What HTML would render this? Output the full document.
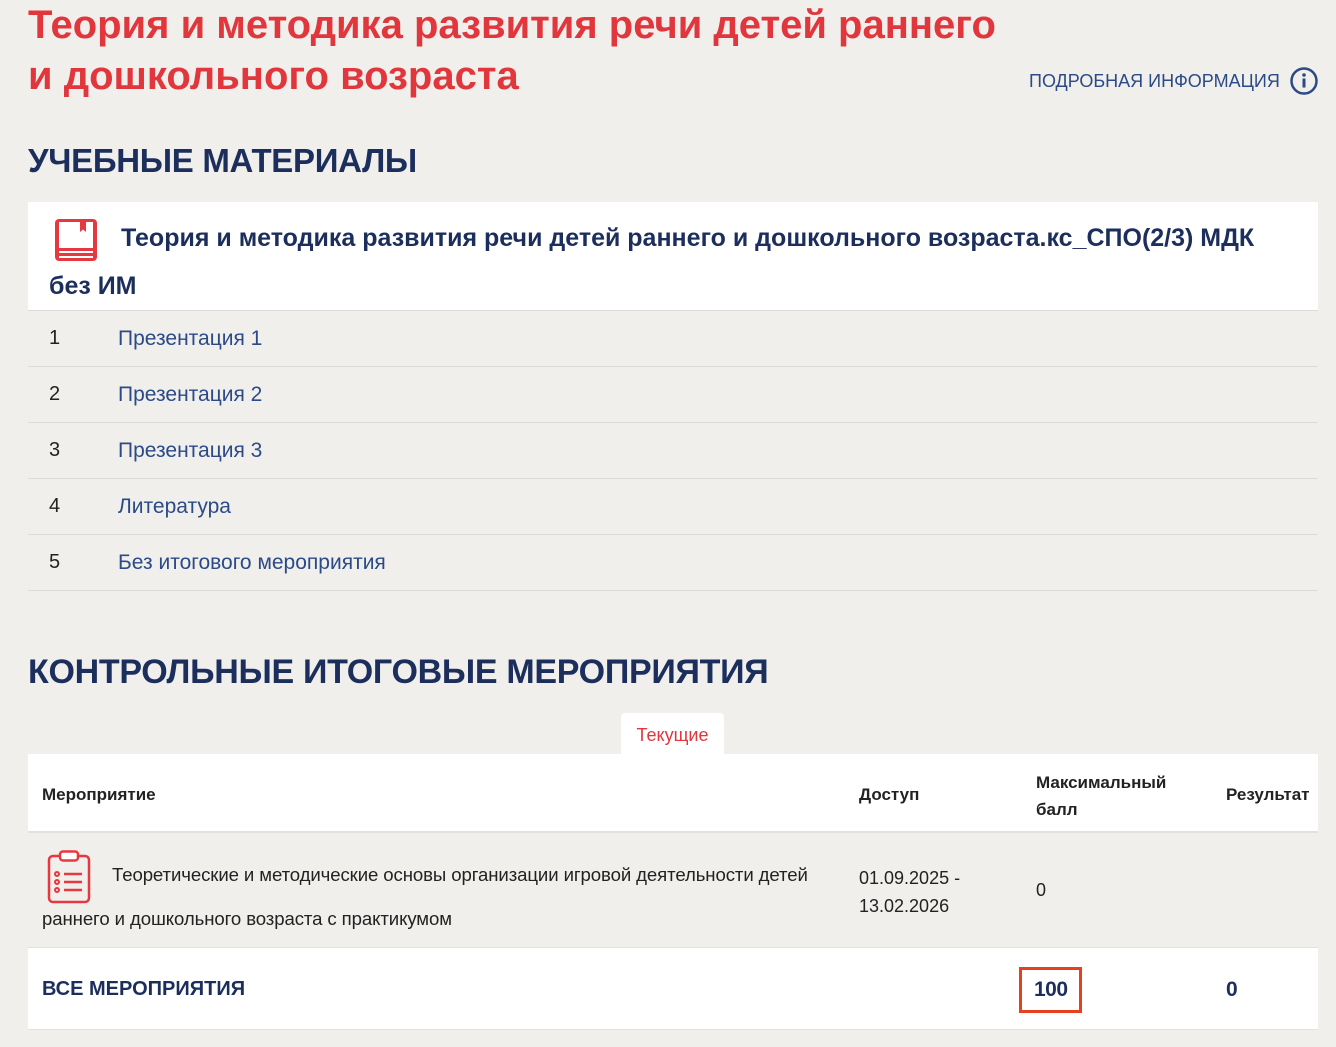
<!DOCTYPE html>
<html><head><meta charset="utf-8"><style>
*{margin:0;padding:0;box-sizing:border-box}
body{width:1336px;height:1047px;background:#f0efec;font-family:"Liberation Sans","DejaVu Sans",sans-serif;position:relative;overflow:hidden;color:#222}
.a{position:absolute;white-space:nowrap}
.title{color:#e0363c;font-size:40px;font-weight:bold;left:28px;line-height:52px}
.h2{color:#1c2e5c;font-size:33px;font-weight:bold;left:28px;letter-spacing:-0.3px}
.row{position:absolute;left:28px;width:1290px;height:56px;border-bottom:1px solid #dcdbd8}
.row .n{position:absolute;left:21px;top:16px;font-size:20px;color:#222}
.row .l{position:absolute;left:90px;top:16px;font-size:21px;color:#2b4a86}
.th{font-size:17px;font-weight:bold;color:#222}
</style></head><body>
<div class="a title" style="top:-1px">Теория и методика развития речи детей раннего</div>
<div class="a title" style="top:50px">и дошкольного возраста</div>
<div class="a" style="left:1029px;top:71px;font-size:18px;color:#2b4a86">ПОДРОБНАЯ ИНФОРМАЦИЯ</div>
<svg class="a" style="left:1289px;top:66px" width="30" height="30" viewBox="0 0 30 30"><circle cx="15" cy="15" r="12.5" fill="none" stroke="#2b4a86" stroke-width="2.5"/><circle cx="15" cy="9" r="1.8" fill="#2b4a86"/><rect x="13.5" y="12.5" width="3" height="9" fill="#2b4a86"/></svg>
<div class="a h2" style="top:142px">УЧЕБНЫЕ МАТЕРИАЛЫ</div>
<div class="a" style="left:28px;top:202px;width:1290px;height:109px;background:#fff;border-bottom:1px solid #dcdbd8"></div>
<svg class="a" style="left:53px;top:217px" width="46" height="46" viewBox="0 0 46 46"><rect x="2" y="2" width="42" height="42" rx="4" fill="#e8383f"/><rect x="6" y="5" width="34" height="26" fill="#fff"/><path d="M27 5v10l3-2.5 3 2.5V5z" fill="#e8383f"/><rect x="6" y="34" width="34" height="2" fill="#fff"/><rect x="6" y="39" width="34" height="2" fill="#fff"/></svg>
<div class="a" style="left:121px;top:224px;font-size:25px;font-weight:bold;color:#1c2e5c">Теория и методика развития речи детей раннего и дошкольного возраста.кс_СПО(2/3) МДК</div>
<div class="a" style="left:49px;top:272px;font-size:25px;font-weight:bold;color:#1c2e5c">без ИМ</div>
<div class="row" style="top:311px"><span class="n">1</span><span class="l">Презентация 1</span></div>
<div class="row" style="top:367px"><span class="n">2</span><span class="l">Презентация 2</span></div>
<div class="row" style="top:423px"><span class="n">3</span><span class="l">Презентация 3</span></div>
<div class="row" style="top:479px"><span class="n">4</span><span class="l">Литература</span></div>
<div class="row" style="top:535px"><span class="n">5</span><span class="l">Без итогового мероприятия</span></div>
<div class="a h2" style="top:653px;font-size:34px">КОНТРОЛЬНЫЕ ИТОГОВЫЕ МЕРОПРИЯТИЯ</div>
<div class="a" style="left:621px;top:713px;width:103px;height:42px;background:#fff;border-radius:4px 4px 0 0;color:#e0363c;font-size:18px;text-align:center;line-height:44px">Текущие</div>
<div class="a" style="left:28px;top:754px;width:1290px;height:79px;background:#fff;border-bottom:2px solid #e2e1de"></div>
<div class="a th" style="left:42px;top:785px">Мероприятие</div>
<div class="a th" style="left:859px;top:785px">Доступ</div>
<div class="a th" style="left:1036px;top:769px;line-height:27px">Максимальный<br>балл</div>
<div class="a th" style="left:1226px;top:785px">Результат</div>
<svg class="a" style="left:47px;top:850px" width="44" height="54" viewBox="0 0 44 54"><rect x="2" y="6" width="40" height="46" rx="4" fill="none" stroke="#e8383f" stroke-width="2.5"/><rect x="13" y="1.5" width="18" height="9" rx="3" fill="#fff" stroke="#e8383f" stroke-width="2.5"/><g fill="none" stroke="#e8383f" stroke-width="2"><circle cx="10" cy="24" r="2"/><circle cx="10" cy="32" r="2"/><circle cx="10" cy="40" r="2"/></g><g stroke="#e8383f" stroke-width="2.5"><path d="M17 24h18M17 32h18M17 40h18"/></g></svg>
<div class="a" style="left:112px;top:864px;font-size:18.6px;color:#222;letter-spacing:-0.1px">Теоретические и методические основы организации игровой деятельности детей</div>
<div class="a" style="left:42px;top:908px;font-size:18.6px;color:#222;letter-spacing:-0.1px">раннего и дошкольного возраста с практикумом</div>
<div class="a" style="left:859px;top:864px;font-size:18px;line-height:28px;color:#222">01.09.2025 -<br>13.02.2026</div>
<div class="a" style="left:1036px;top:880px;font-size:18px;color:#222">0</div>
<div class="a" style="left:28px;top:947px;width:1290px;height:83px;background:#fff;border-top:1px solid #e2e1de;border-bottom:1px solid #e2e1de"></div>
<div class="a" style="left:42px;top:978px;font-size:20px;font-weight:bold;color:#1c2e5c">ВСЕ МЕРОПРИЯТИЯ</div>
<div class="a" style="left:1019px;top:967px;width:63px;height:46px;border:3px solid #e8401f"></div>
<div class="a" style="left:1034px;top:978px;font-size:21px;color:#1c2e5c;font-weight:bold;letter-spacing:-0.5px">100</div>
<div class="a" style="left:1226px;top:978px;font-size:21px;font-weight:bold;color:#1c2e5c">0</div>
</body></html>
